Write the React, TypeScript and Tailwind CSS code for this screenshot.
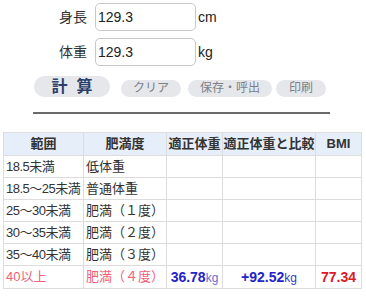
import React from "react";

const font = { fontFamily: '"Liberation Sans", "Noto Sans CJK JP", sans-serif' };

const rows: [string, string][] = [
  ["18.5未満", "低体重"],
  ["18.5〜25未満", "普通体重"],
  ["25〜30未満", "肥満（１度）"],
  ["30〜35未満", "肥満（２度）"],
  ["35〜40未満", "肥満（３度）"],
];

export default function App() {
  return (
    <div className="w-[366px] h-[300px] bg-white overflow-hidden text-[#222]" style={font}>
      <div className="pt-[3px] flex flex-col gap-[7px]">
        {[
          ["身長", "cm"],
          ["体重", "kg"],
        ].map(([label, unit]) => (
          <div key={label} className="flex items-center h-[28px]">
            <div className="w-[87px] text-right text-[14px] text-[#333]">{label}</div>
            <input
              readOnly
              value="129.3"
              className="ml-[8px] w-[101px] h-[28px] border border-[#c8c8c8] rounded-[5px] px-[2px] text-[14px] text-[#222] outline-none"
              style={font}
            />
            <div className="ml-[2px] text-[14px] text-[#222]">{unit}</div>
          </div>
        ))}
      </div>
      <div className="mt-[10px] flex items-center pl-[34px] h-[21px]">
        <div className="w-[76px] h-[21px] rounded-full bg-[#e6e7eb] flex items-center justify-center text-[16px] font-bold text-[#2c3f6c] gap-[9px]">
          <span>計</span>
          <span>算</span>
        </div>
        <div className="ml-[11px] mt-[3px] h-[17px] px-[12px] rounded-full bg-[#e6e7eb] flex items-center text-[12px] text-[#7a7f88]">クリア</div>
        <div className="ml-[7px] mt-[3px] h-[17px] px-[12px] rounded-full bg-[#e6e7eb] flex items-center text-[12px] text-[#7a7f88]">保存・呼出</div>
        <div className="ml-[4px] mt-[3px] h-[17px] px-[13px] rounded-full bg-[#e6e7eb] flex items-center text-[12px] text-[#7a7f88]">印刷</div>
      </div>
      <div className="mt-[15px] ml-[33px] w-[297px] h-[2px] bg-[#6a6a6a]" />
      <table className="mt-[18px] ml-[3px] w-[358px] border-collapse text-[13px] table-fixed">
        <colgroup>
          <col className="w-[80px]" />
          <col className="w-[83px]" />
          <col className="w-[56px]" />
          <col className="w-[93px]" />
          <col className="w-[46px]" />
        </colgroup>
        <thead>
          <tr className="h-[23px] bg-[#e6eef9]">
            {["範囲", "肥満度", "適正体重", "適正体重と比較", "BMI"].map((h) => (
              <th key={h} className="border border-[#dcdcdc] font-bold text-[#333] text-center p-0 whitespace-nowrap">
                {h}
              </th>
            ))}
          </tr>
        </thead>
        <tbody>
          {rows.map(([a, b]) => (
            <tr key={a} className="h-[22px]">
              <td className="border border-[#dcdcdc] pl-[2px] pr-0 text-[#333] whitespace-nowrap overflow-hidden tracking-[-0.5px]">{a}</td>
              <td className="border border-[#dcdcdc] px-[2px] text-[#333] whitespace-nowrap">{b}</td>
              <td className="border border-[#dcdcdc]" />
              <td className="border border-[#dcdcdc]" />
              <td className="border border-[#dcdcdc]" />
            </tr>
          ))}
          <tr className="h-[23px]">
            <td className="border border-[#dcdcdc] pl-[2px] text-[#f0607a] whitespace-nowrap">40以上</td>
            <td className="border border-[#dcdcdc] px-[2px] text-[#f0607a] whitespace-nowrap">肥満（４度）</td>
            <td className="border border-[#dcdcdc] text-center whitespace-nowrap p-0">
              <span className="text-[14px] font-bold text-[#2424c8]">36.78</span>
              <span className="text-[12px] text-[#6a6ad0]">kg</span>
            </td>
            <td className="border border-[#dcdcdc] text-center whitespace-nowrap p-0">
              <span className="text-[14px] font-bold text-[#2424c8]">+92.52</span>
              <span className="text-[12px] text-[#3a3ac8]">kg</span>
            </td>
            <td className="border border-[#dcdcdc] text-center whitespace-nowrap p-0">
              <span className="text-[14px] font-bold text-[#dc1a28]">77.34</span>
            </td>
          </tr>
        </tbody>
      </table>
    </div>
  );
}
